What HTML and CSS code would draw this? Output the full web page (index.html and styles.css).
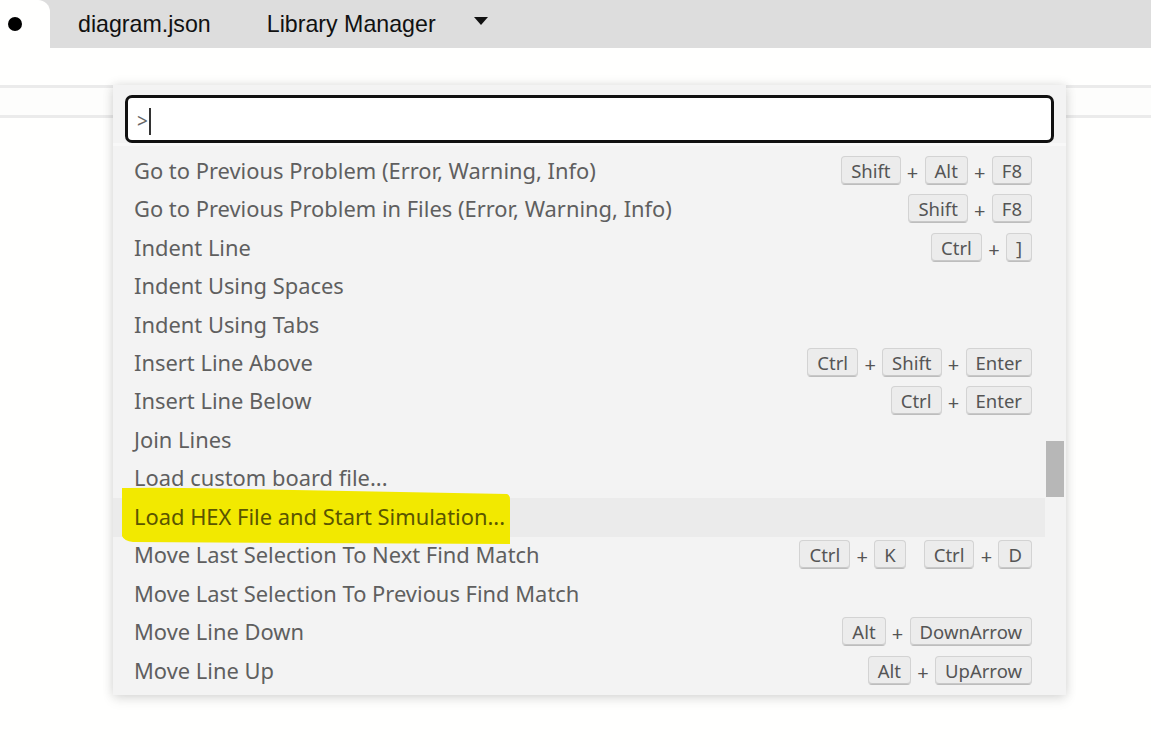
FILE: index.html
```html
<!DOCTYPE html>
<html>
<head>
<meta charset="utf-8">
<link rel="stylesheet" href="styles.css">
</head>
<body>
<div class="tabs">
  <div class="tab active"><span class="dot"></span></div>
  <div class="tab">diagram.json</div>
  <div class="tab">Library Manager</div>
  <div class="tab more"><span class="caret"></span></div>
</div>
<div class="gap"></div>
<div class="strip"></div>

<div class="palette">
  <div class="input"><span class="prompt">&gt;</span><span class="cursor"></span></div>
  <div class="sep"></div>
  <div class="list">
    <div class="row"><span class="label">Go to Previous Problem (Error, Warning, Info)</span><span class="keys"><kbd>Shift</kbd><i>+</i><kbd>Alt</kbd><i>+</i><kbd>F8</kbd></span></div>
    <div class="row"><span class="label">Go to Previous Problem in Files (Error, Warning, Info)</span><span class="keys"><kbd>Shift</kbd><i>+</i><kbd>F8</kbd></span></div>
    <div class="row"><span class="label">Indent Line</span><span class="keys"><kbd>Ctrl</kbd><i>+</i><kbd>]</kbd></span></div>
    <div class="row"><span class="label">Indent Using Spaces</span></div>
    <div class="row"><span class="label">Indent Using Tabs</span></div>
    <div class="row"><span class="label">Insert Line Above</span><span class="keys"><kbd>Ctrl</kbd><i>+</i><kbd>Shift</kbd><i>+</i><kbd>Enter</kbd></span></div>
    <div class="row"><span class="label">Insert Line Below</span><span class="keys"><kbd>Ctrl</kbd><i>+</i><kbd>Enter</kbd></span></div>
    <div class="row"><span class="label">Join Lines</span></div>
    <div class="row"><span class="label">Load custom board file...</span></div>
    <div class="row focused"><span class="label">Load HEX File and Start Simulation...</span></div>
    <div class="row"><span class="label">Move Last Selection To Next Find Match</span><span class="keys"><kbd>Ctrl</kbd><i>+</i><kbd>K</kbd><b class="chord"></b><kbd>Ctrl</kbd><i>+</i><kbd>D</kbd></span></div>
    <div class="row"><span class="label">Move Last Selection To Previous Find Match</span></div>
    <div class="row"><span class="label">Move Line Down</span><span class="keys"><kbd>Alt</kbd><i>+</i><kbd>DownArrow</kbd></span></div>
    <div class="row"><span class="label">Move Line Up</span><span class="keys"><kbd>Alt</kbd><i>+</i><kbd>UpArrow</kbd></span></div>
  </div>
  <div class="scrollbar"></div>
  <svg class="marker" width="392" height="60" viewBox="0 0 392 60"><path d="M1 2 Q40 1 120 3 L386 8 Q389 9 389 14 L389 58 L12 56 Q3 55 1 50 Z" fill="#f2e900"/></svg>
</div>
</body>
</html>
```

FILE: styles.css
```css
html, body {
  margin: 0;
  padding: 0;
  background: #fffffe;
  width: 1151px;
  height: 747px;
  overflow: hidden;
}
body {
  position: relative;
  font-family: "Liberation Sans", Arial, sans-serif;
}
.tabs {
  height: 48px;
  background: #dddddd;
  display: flex;
  align-items: stretch;
}
.tab {
  font-size: 23.2px;
  color: #111;
  display: flex;
  align-items: center;
}
.tab.active {
  width: 50px;
  background: #fffffe;
  border-top-right-radius: 12px;
}
.dot {
  width: 14px;
  height: 14px;
  border-radius: 50%;
  background: #000;
  margin-left: 8px;
}
.tab:nth-child(2) { margin-left: 28px; }
.tab:nth-child(3) { margin-left: 56px; }
.tab.more { margin-left: 38px; }
.caret {
  width: 0;
  height: 0;
  border-left: 7px solid transparent;
  border-right: 7px solid transparent;
  border-top: 8px solid #111;
  margin-top: -6px;
}
.gap { height: 37px; }
.strip {
  height: 27px;
  border-top: 3px solid #ebebeb;
  border-bottom: 3px solid #ebebeb;
  background: #fdfdfc;
}
.palette {
  position: absolute;
  left: 113px;
  top: 85px;
  width: 953px;
  height: 610px;
  background: #f3f3f3;
  box-shadow: 0 0 10px rgba(0,0,0,0.13), 0 5px 12px rgba(0,0,0,0.08);
  box-sizing: border-box;
  padding: 10px 12px 0 12px;
  font-family: "Noto Sans", "Open Sans", sans-serif;
}
.input {
  height: 48px;
  box-sizing: border-box;
  border: 3px solid #111;
  border-radius: 7px;
  background: #fff;
  display: flex;
  align-items: center;
  padding-left: 9px;
  padding-top: 4px;
}
.prompt {
  font-size: 19px;
  color: #666;
}
.cursor {
  width: 2px;
  height: 27px;
  background: #333;
  margin-left: 1px;
}
.sep {
  height: 9px;
  border-top: 3px solid #f8f8f8;
  box-sizing: border-box;
  margin: 0 -12px;
}
.list {
  margin: 0 -12px;
}
.row {
  height: 38.46px;
  box-sizing: border-box;
  display: flex;
  align-items: center;
  justify-content: space-between;
  padding-left: 21px;
  padding-right: 34px;
  padding-bottom: 2px;
  color: #5f5f5f;
  font-size: 21.9px;
}
.row.focused {
  background: #ebebeb;
  margin-right: 21px;
  padding-right: 13px;
}
.row.focused .label { color: #5a5500; }
.label {
  white-space: nowrap;
  position: relative;
  z-index: 1;
}
.keys {
  display: flex;
  align-items: center;
  font-size: 18.5px;
  position: relative;
  z-index: 1;
}
kbd {
  font-family: inherit;
  font-size: inherit;
  color: #555;
  background: #ececec;
  border: 1px solid #d3d3d3;
  border-bottom-color: #bdbdbd;
  box-shadow: inset 0 -1px 0 #c8c8c8;
  border-radius: 4px;
  height: 29px;
  box-sizing: border-box;
  padding: 0 9px;
  display: flex;
  align-items: center;
}
.keys i {
  font-style: normal;
  color: #555;
  width: 24px;
  text-align: center;
  padding-top: 4px;
  font-size: 20px;
}
.chord { width: 18px; }
.scrollbar {
  position: absolute;
  left: 933px;
  top: 356px;
  width: 18px;
  height: 56px;
  background: #b7b7b7;
}
.marker {
  position: absolute;
  left: 8px;
  top: 401px;
  z-index: 0;
}
```
